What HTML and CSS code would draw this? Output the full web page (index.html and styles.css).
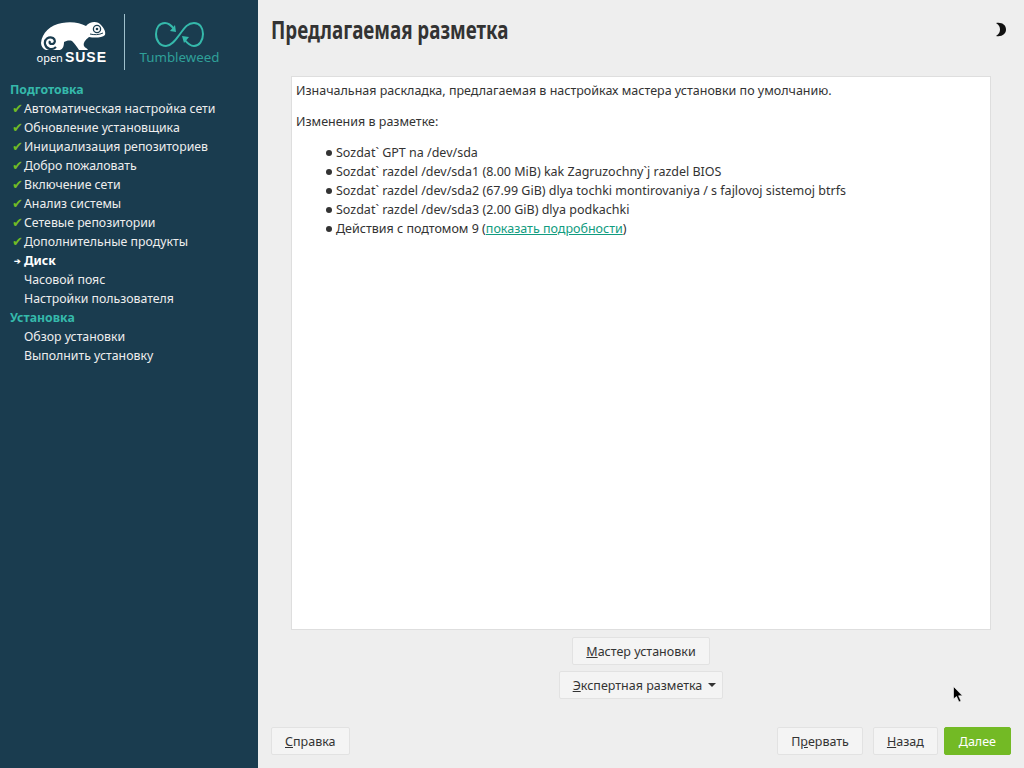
FILE: index.html
```html
<!DOCTYPE html>
<html lang="ru">
<head>
    <meta charset="UTF-8">
    <title>Предлагаемая разметка</title>
    <link rel="stylesheet" href="styles.css">
</head>
<body>
    <aside class="sidebar">
        <div class="logo">
            <div class="logo-suse">
                <svg class="gecko" width="66" height="30" viewBox="0 0 66 30">
                    <path fill="#fff" d="M1 22C2 12 10 4 22 2C32 0 40 2 46 5C50 0 58 0 61 4C64 7 66 11 65 14C62 17 54 17 49 16C45 19 43 22 44 25C45 27 47 27 48 29H39C37 26 35 23 32 20C29 19 26 20 24 21C24 25 23 28 20 29H6C3 28 1 25 1 22Z"/>
                    <circle cx="57" cy="8" r="3.6" fill="none" stroke="#1a3c4f" stroke-width="1.3"/>
                    <circle cx="57" cy="8" r="1.3" fill="#1a3c4f"/>
                    <path fill="none" stroke="#1a3c4f" stroke-width="1" d="M50 13C54 14 59 14 63 12"/>
                    <path fill="none" stroke="#1a3c4f" stroke-width="2.2" d="M16 26C12 30 6 28 5 23C4 18 9 15 13 17C16 19 15 23 12 23C10 23 9 22 10 20"/>
                </svg>
                <div class="wordmark"><span class="open">open</span><span class="suse">SUSE</span></div>
            </div>
            <div class="logo-line"></div>
            <div class="logo-tw">
                <svg width="50" height="27" viewBox="0 0 50 27">
                    <path fill="none" stroke="#35b9ab" stroke-width="2" d="M19 8C16 4 13 2 10 2C4 2 1 7 1 13C1 20 5 25 11 25C16 25 20 20 25 13C30 6 33 2 39 2C45 2 48 7 48 13C48 20 44 25 39 25C35 25 32 22 29 18"/>
                    <path fill="#35b9ab" d="M21 11L15 10L20 4ZM27 15L34 16L29 22Z"/>
                </svg>
                <div class="tw-name">Tumbleweed</div>
            </div>
        </div>
        <nav class="steps">
            <div class="heading">Подготовка</div>
            <div class="step"><span class="mark done">✔</span>Автоматическая настройка сети</div>
            <div class="step"><span class="mark done">✔</span>Обновление установщика</div>
            <div class="step"><span class="mark done">✔</span>Инициализация репозиториев</div>
            <div class="step"><span class="mark done">✔</span>Добро пожаловать</div>
            <div class="step"><span class="mark done">✔</span>Включение сети</div>
            <div class="step"><span class="mark done">✔</span>Анализ системы</div>
            <div class="step"><span class="mark done">✔</span>Сетевые репозитории</div>
            <div class="step"><span class="mark done">✔</span>Дополнительные продукты</div>
            <div class="step current"><span class="mark">➔</span>Диск</div>
            <div class="step"><span class="mark"></span>Часовой пояс</div>
            <div class="step"><span class="mark"></span>Настройки пользователя</div>
            <div class="heading">Установка</div>
            <div class="step"><span class="mark"></span>Обзор установки</div>
            <div class="step"><span class="mark"></span>Выполнить установку</div>
        </nav>
    </aside>

    <main class="content">
        <header class="top">
            <h1>Предлагаемая разметка</h1>
            <svg class="moon" width="12" height="15" viewBox="0 0 12 15">
                <path fill="#111" d="M1 1C7 0 11 3 11 7.5C11 12 7 15 1 14C4 12 5 10 5 7.5C5 5 4 3 1 1Z"/>
            </svg>
        </header>

        <section class="panel">
            <p>Изначальная раскладка, предлагаемая в настройках мастера установки по умолчанию.</p>
            <p>Изменения в разметке:</p>
            <ul>
                <li>Sozdat` GPT na /dev/sda</li>
                <li>Sozdat` razdel /dev/sda1 (8.00 MiB) kak Zagruzochny`j razdel BIOS</li>
                <li>Sozdat` razdel /dev/sda2 (67.99 GiB) dlya tochki montirovaniya / s fajlovoj sistemoj btrfs</li>
                <li>Sozdat` razdel /dev/sda3 (2.00 GiB) dlya podkachki</li>
                <li>Действия с подтомом 9 (<a href="#">показать подробности</a>)</li>
            </ul>
        </section>

        <div class="center-buttons">
            <button class="btn wizard"><u>М</u>астер установки</button>
            <button class="btn expert"><u>Э</u>кспертная разметка<span class="caret"></span></button>
        </div>

        <footer class="bottom">
            <button class="btn help"><u>С</u>правка</button>
            <div class="spacer"></div>
            <button class="btn abort">П<u>р</u>ервать</button>
            <button class="btn back"><u>Н</u>азад</button>
            <button class="btn next"><u>Д</u>алее</button>
        </footer>
    </main>

    <svg class="cursor" width="11" height="17" viewBox="0 0 11 17">
        <path fill="#000" stroke="#fff" stroke-width="0.6" d="M0.5 0.5V13L3.5 10.5L6 16L8 15L5.6 9.8H9.5Z"/>
    </svg>
</body>
</html>
```

FILE: styles.css
```css
body {
    margin: 0;
    display: flex;
    height: 768px;
    overflow: hidden;
    background-color: #eeeeee;
    color: #333;
    font-family: 'Noto Sans', sans-serif;
    font-size: 12.5px;
}

.sidebar {
    width: 258px;
    flex-shrink: 0;
    background-color: #1a3c4f;
    color: #eee;
    font-size: 12.3px;
}

.logo {
    height: 80px;
    display: flex;
    justify-content: center;
    box-sizing: border-box;
}

.logo-suse {
    width: 68px;
    padding-top: 21px;
    color: #fff;
}

.gecko {
    display: block;
    margin-left: 1px;
}

.wordmark {
    display: flex;
    align-items: baseline;
    margin-left: -2px;
    line-height: 13px;
    white-space: nowrap;
}

.open {
    font-size: 11px;
}

.suse {
    margin-left: 2px;
    font-family: 'Liberation Sans', sans-serif;
    font-size: 14px;
    font-weight: bold;
    letter-spacing: 1px;
}

.logo-line {
    width: 1px;
    height: 56px;
    margin: 14px 15px 0 17px;
    background-color: #9fc0cc;
}

.logo-tw {
    width: 80px;
    padding-top: 21px;
    color: #35b9ab;
    text-align: center;
}

.logo-tw svg {
    display: block;
    margin: 0 auto;
}

.tw-name {
    margin-top: 1px;
    font-size: 13.3px;
    line-height: 16px;
    opacity: 0.8;
}

.steps {
    padding-left: 10px;
}

.heading,
.step {
    height: 19px;
    line-height: 19px;
    white-space: nowrap;
}

.heading {
    color: #35b9ab;
    font-weight: bold;
}

.step {
    display: flex;
}

.mark {
    width: 14px;
    flex-shrink: 0;
    font-size: 13px;
    text-align: center;
}

.done {
    color: #73ba25;
}

.current {
    color: #fff;
    font-weight: bold;
}

.current .mark {
    font-size: 8px;
}

.content {
    flex: 1;
    display: flex;
    flex-direction: column;
    padding: 0 13px 13px;
    min-width: 0;
}

.top {
    height: 76px;
    display: flex;
    justify-content: space-between;
    flex-shrink: 0;
}

h1 {
    margin: 12px 0 0;
    font-family: 'Noto Sans', sans-serif;
    font-size: 25px;
    font-weight: bold;
    line-height: 34px;
    color: #333;
    white-space: nowrap;
    transform: scaleX(0.75);
    transform-origin: left center;
}

.moon {
    margin-top: 22px;
    margin-right: 4px;
}

.panel {
    height: 554px;
    margin: 0 20px;
    padding: 4px;
    box-sizing: border-box;
    background-color: #fff;
    border: 1px solid #dedede;
    line-height: 19px;
}

.panel p {
    margin: 0 0 12px;
}

.panel ul {
    margin: 0;
    padding-left: 40px;
    list-style: none;
}

.panel li::before {
    content: "";
    display: inline-block;
    width: 6px;
    height: 6px;
    margin-left: -10px;
    margin-right: 4px;
    border-radius: 50%;
    background-color: #333;
    vertical-align: 1px;
}

.panel a {
    color: #119c80;
}

.center-buttons {
    display: flex;
    flex-direction: column;
    align-items: center;
    gap: 6px;
    margin-top: 7px;
}

.btn {
    height: 28px;
    padding: 0 13px;
    font-family: inherit;
    font-size: 12.5px;
    color: #333;
    background-color: #f4f4f4;
    border: 1px solid #e2e2e2;
    border-radius: 2px;
}

.expert {
    display: flex;
    align-items: center;
    padding-right: 6px;
}

.caret {
    width: 0;
    height: 0;
    margin-left: 6px;
    border-left: 4px solid transparent;
    border-right: 4px solid transparent;
    border-top: 4px solid #333;
}

.bottom {
    display: flex;
    gap: 10px;
    margin-top: auto;
}

.spacer {
    flex: 1;
}

.next {
    margin-left: -4px;
    padding: 0 14px;
    color: #fff;
    background-color: #73ba25;
    border-color: #73ba25;
}

.cursor {
    position: absolute;
    left: 953px;
    top: 686px;
}
```
